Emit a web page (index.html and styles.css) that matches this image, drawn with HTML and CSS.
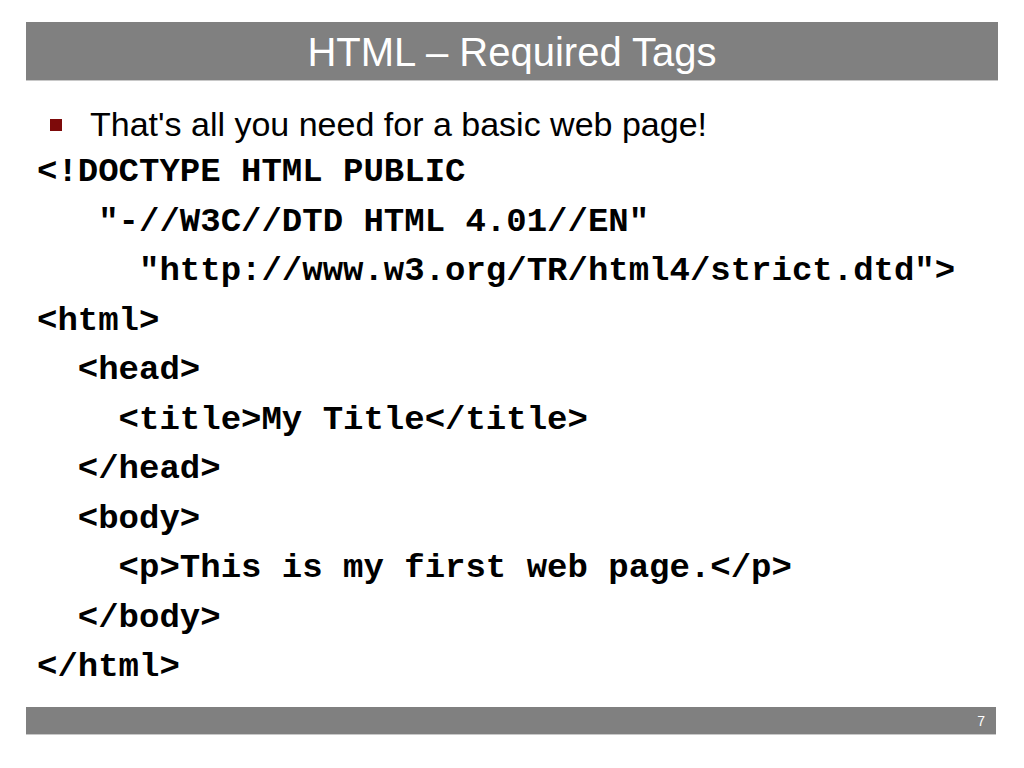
FILE: index.html
```html
<!DOCTYPE html>
<html>
<head>
	<meta charset="UTF-8">
	<title>HTML – Required Tags</title>
	<link rel="stylesheet" href="styles.css">
</head>
<body>
	<div class="slide">
		<h1 class="title">HTML – Required Tags</h1>
		<ul class="points">
			<li>That's all you need for a basic web page!</li>
		</ul>
		<pre class="code">&lt;!DOCTYPE HTML PUBLIC
   "-//W3C//DTD HTML 4.01//EN"
     "http://www.w3.org/TR/html4/strict.dtd"&gt;
&lt;html&gt;
  &lt;head&gt;
    &lt;title&gt;My Title&lt;/title&gt;
  &lt;/head&gt;
  &lt;body&gt;
    &lt;p&gt;This is my first web page.&lt;/p&gt;
  &lt;/body&gt;
&lt;/html&gt;</pre>
		<div class="footer"><span class="num">7</span></div>
	</div>
</body>
</html>
```

FILE: styles.css
```css
body,ul,h1,pre{
	margin: 0;
	padding: 0;
}
body{
	background: #fff;
}
.slide{
	width: 1024px;
	height: 768px;
	display: flex;
	flex-direction: column;
	padding: 22px 26px 0;
	box-sizing: border-box;
}
.title{
	height: 58px;
	line-height: 60px;
	background: #808080;
	border-bottom: 1px solid #c8c8c8;
	color: #fff;
	text-align: center;
	font-family: "Liberation Sans Narrow", "Liberation Sans", sans-serif;
	font-weight: normal;
	font-size: 40px;
}
.points{
	list-style: none;
	margin-top: 22px;
	padding-left: 24px;
}
.points li{
	position: relative;
	padding-left: 40px;
	font-family: "Liberation Sans Narrow", "Liberation Sans", sans-serif;
	font-size: 34px;
	line-height: 42px;
	color: #000;
}
.points li::before{
	content: "";
	position: absolute;
	left: 0;
	top: 16px;
	width: 12px;
	height: 12px;
	background: #7d0a0a;
}
.code{
	margin-top: 3px;
	padding-left: 11px;
	font-family: "Liberation Mono", "Courier New", monospace;
	font-weight: bold;
	font-size: 34px;
	line-height: 49.5px;
	color: #000;
}
.footer{
	margin-top: auto;
	margin-bottom: 33px;
	margin-right: 2px;
	height: 27px;
	background: #808080;
	border-bottom: 1px solid #c8c8c8;
	display: flex;
	justify-content: flex-end;
	align-items: center;
	padding-right: 11px;
}
.num{
	color: #fff;
	font-family: "Liberation Sans", sans-serif;
	font-size: 14px;
}
```
